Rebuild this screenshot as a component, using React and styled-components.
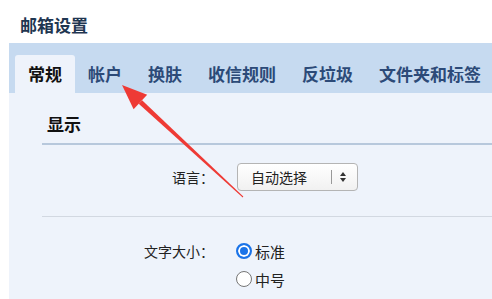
import React from "react";
import styled, { createGlobalStyle } from "styled-components";

const GlobalStyle = createGlobalStyle`
  html, body {
    margin: 0;
    padding: 0;
    background: #ffffff;
    font-family: "Noto Sans CJK SC", "Noto Sans", sans-serif;
    overflow: hidden;
  }
`;

const tabs = ["常规", "帐户", "换肤", "收信规则", "反垃圾", "文件夹和标签"];

const App = () => {
  return (
    <Page>
      <GlobalStyle />
      <Title>邮箱设置</Title>
      <Settings>
        <TabBar>
          {tabs.map((name, idx) => (
            <Tab key={name} $active={idx === 0}>
              {name}
            </Tab>
          ))}
        </TabBar>
        <Panel>
          <SectionHead>显示</SectionHead>
          <FormRow $top={18} $bottom={25} $divider>
            <Label>语言：</Label>
            <Select>
              <SelectText>自动选择</SelectText>
              <SelectDivider />
              <svg width="8" height="12" viewBox="0 0 8 12">
                <path d="M4 1 L7 5 L1 5 Z" fill="#333" />
                <path d="M4 11 L7 7 L1 7 Z" fill="#333" />
              </svg>
            </Select>
          </FormRow>
          <FormRow $top={20} $bottom={0}>
            <Label>文字大小：</Label>
            <RadioList>
              <RadioItem>
                <Radio $checked />
                标准
              </RadioItem>
              <RadioItem>
                <Radio />
                中号
              </RadioItem>
              <RadioItem>
                <Radio />
                大号
              </RadioItem>
            </RadioList>
          </FormRow>
        </Panel>
      </Settings>
      <ArrowLayer width="492" height="299" viewBox="0 0 492 299">
        <polygon
          points="243.3,196.6 242.7,197.4 138.7,103.8 142.1,100.2"
          fill="#ee3a35"
        />
        <polygon points="122,85 147.2,94.7 133.6,109.3" fill="#ee3a35" />
      </ArrowLayer>
    </Page>
  );
};

const Page = styled.div`
  position: relative;
  width: 492px;
  height: 299px;
  overflow: hidden;
`;

const Title = styled.div`
  box-sizing: border-box;
  height: 43px;
  padding: 14px 0 0 20px;
  line-height: 22px;
  font-size: 17px;
  font-weight: 700;
  color: #1f3651;
`;

const Settings = styled.div`
  margin-left: 9px;
`;

const TabBar = styled.div`
  display: flex;
  align-items: flex-end;
  box-sizing: border-box;
  height: 50px;
  padding-left: 6px;
  background: #c6daf0;
  white-space: nowrap;
`;

const Tab = styled.div`
  flex-shrink: 0;
  height: 38px;
  line-height: 38px;
  padding: 0 13px;
  font-size: 17px;
  font-weight: 700;
  color: ${(p) => (p.$active ? "#111111" : "#2c4a78")};
  background: ${(p) => (p.$active ? "#eef3fb" : "transparent")};
  border-radius: 3px 3px 0 0;
`;

const Panel = styled.div`
  height: 300px;
  padding-left: 33px;
  background: #eef3fb;
`;

const SectionHead = styled.div`
  padding: 12px 0 0 5px;
  line-height: 38px;
  font-size: 17px;
  font-weight: 700;
  color: #111111;
  border-bottom: 2px solid #b7c8dc;
`;

const FormRow = styled.div`
  display: flex;
  align-items: flex-start;
  gap: 23px;
  padding-top: ${(p) => p.$top}px;
  padding-bottom: ${(p) => p.$bottom}px;
  border-bottom: ${(p) => (p.$divider ? "1px solid #d2d8e1" : "none")};
`;

const Label = styled.div`
  width: 172px;
  text-align: right;
  line-height: 28px;
  font-size: 14px;
  color: #222222;
`;

const Select = styled.div`
  display: flex;
  align-items: center;
  box-sizing: border-box;
  width: 121px;
  height: 28px;
  padding: 0 0 0 13px;
  border: 1px solid #b4b4b4;
  border-radius: 4px;
  background: linear-gradient(#ffffff, #f1f1f1);
  font-size: 14px;
  color: #222222;
`;

const SelectText = styled.span`
  width: 80px;
`;

const SelectDivider = styled.span`
  width: 1px;
  height: 14px;
  margin-right: 7px;
  background: #999999;
`;

const RadioList = styled.div`
  display: flex;
  flex-direction: column;
`;

const RadioItem = styled.div`
  display: flex;
  align-items: center;
  height: 28px;
  margin-left: -1px;
  font-size: 15px;
  color: #222222;
`;

const Radio = styled.span`
  box-sizing: border-box;
  width: 16px;
  height: 16px;
  margin-right: 3px;
  border-radius: 50%;
  background: #ffffff;
  border: ${(p) => (p.$checked ? "2px solid #1a73e8" : "1px solid #767676")};
  box-shadow: ${(p) => (p.$checked ? "inset 0 0 0 2px #ffffff" : "none")};
  background: ${(p) => (p.$checked ? "#1a73e8" : "#ffffff")};
`;

const ArrowLayer = styled.svg`
  position: absolute;
  left: 0;
  top: 0;
  pointer-events: none;
`;

export default App;
